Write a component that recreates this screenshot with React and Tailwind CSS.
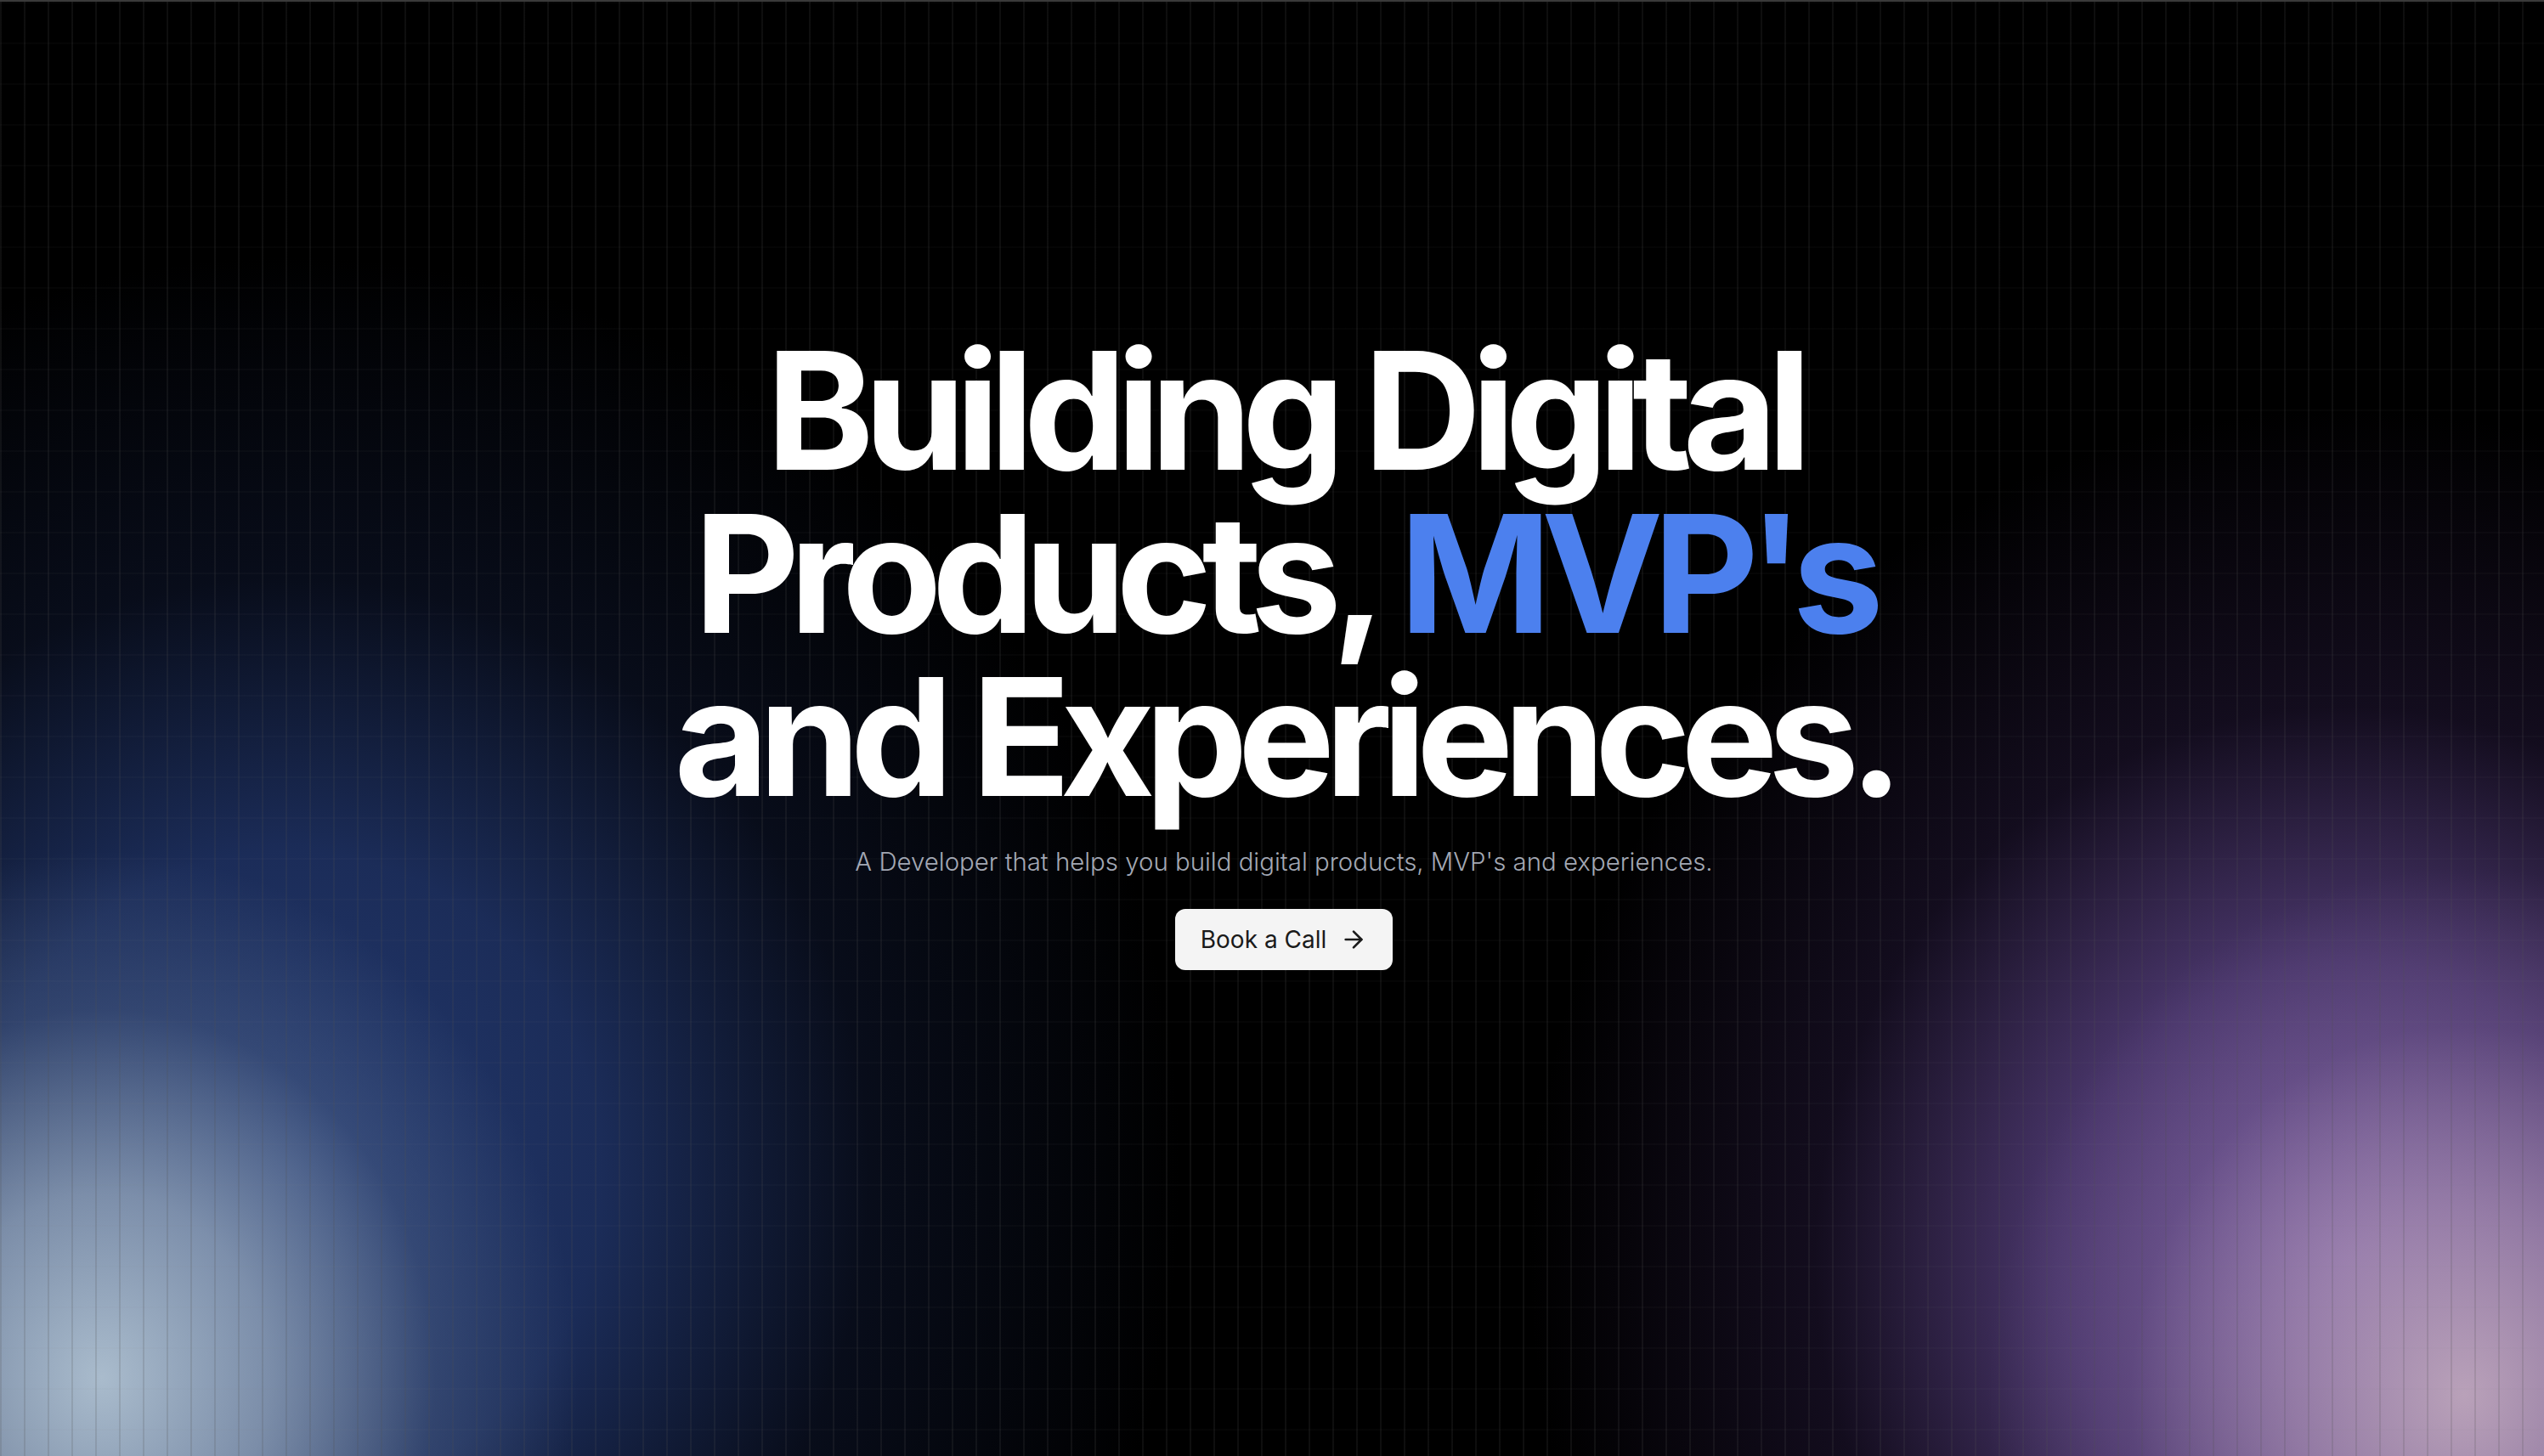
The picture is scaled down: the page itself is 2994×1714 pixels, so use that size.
import React from 'react';
import { ArrowRight } from 'lucide-react';

export default function App() {
  return (
    <div className="relative w-full h-[1714px] overflow-hidden bg-black border-t-2 border-[#3a3a3a] font-['Inter',sans-serif]">
      {/* glow blobs */}
      <div className="pointer-events-none absolute inset-0 bg-[radial-gradient(ellipse_1050px_1080px_at_340px_1380px,rgba(36,58,112,1)_0%,rgba(32,52,104,0.85)_35%,rgba(18,28,58,0.45)_65%,transparent_100%)]" />
      <div className="pointer-events-none absolute inset-0 bg-[radial-gradient(ellipse_560px_620px_at_120px_1620px,rgba(174,192,208,0.97)_0%,rgba(150,168,190,0.78)_35%,rgba(90,110,145,0.35)_70%,transparent_100%)]" />
      <div className="pointer-events-none absolute inset-0 bg-[radial-gradient(ellipse_960px_1000px_at_2760px_1480px,rgba(126,98,168,0.97)_0%,rgba(92,68,134,0.8)_35%,rgba(42,28,66,0.45)_65%,transparent_100%)]" />
      <div className="pointer-events-none absolute inset-0 bg-[radial-gradient(ellipse_560px_620px_at_2900px_1640px,rgba(190,166,188,0.95)_0%,rgba(168,142,178,0.72)_35%,rgba(124,98,150,0.3)_70%,transparent_100%)]" />

      {/* grid */}
      <div className="pointer-events-none absolute inset-0 bg-[linear-gradient(to_right,#4f4f4f2e_2px,transparent_2px),linear-gradient(to_bottom,#8080800a_2px,transparent_2px)] bg-[size:28px_48px]" />

      <div className="relative flex flex-col items-center pt-[385px] pl-[28px]">
        <h1 className="text-center text-[192px] leading-none font-bold tracking-[-0.062em] text-white">
          Building Digital
          <br />
          Products, <span className="text-[#4c80ee]">MVP's</span>
          <br />
          and Experiences.
        </h1>
        <p className="mt-[32px] text-[29.4px] leading-[40px] font-light text-[#a3a8b4]">
          A Developer that helps you build digital products, MVP's and experiences.
        </p>
        <button className="mt-[35px] flex items-center gap-4 rounded-xl bg-[#f4f4f4] px-[30px] py-4 text-[28px] leading-[40px] text-[#1a1a1a]">
          Book a Call
          <ArrowRight className="w-8 h-8" strokeWidth={2} />
        </button>
      </div>
    </div>
  );
}
